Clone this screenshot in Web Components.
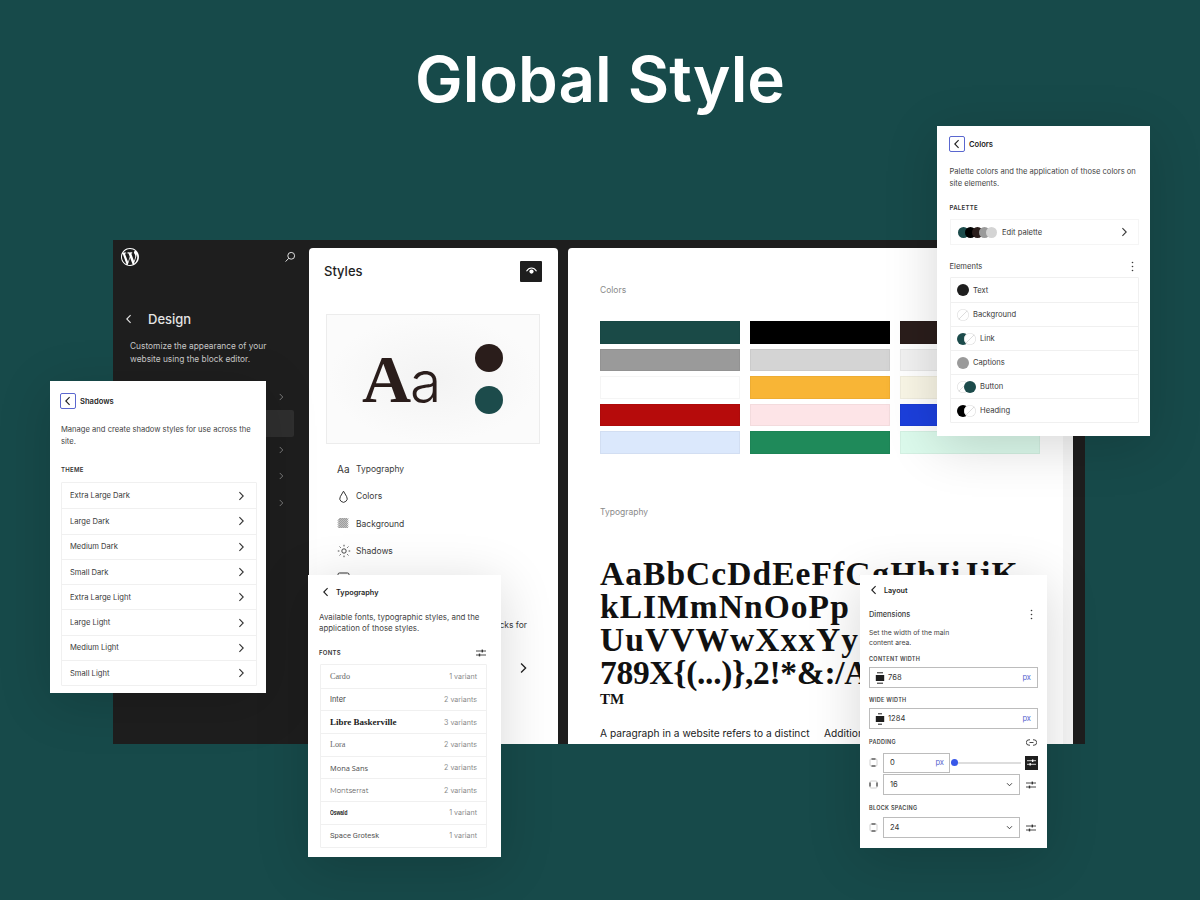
<!DOCTYPE html>
<html lang="en">
<head>
<meta charset="utf-8">
<title>Global Style</title>
<style>
  html, body { margin: 0; padding: 0; background: #174a4a; }
  body { width: 1200px; height: 900px; overflow: hidden; font-family: Inter, "Liberation Sans", sans-serif; }
</style>
</head>
<body>
<global-page></global-page>

<script>
// iconos compartidos, todos en svg inline
const icon = (w, h, box, body) => `<svg width="${w}" height="${h}" viewBox="${box}" fill="none" stroke="currentColor" aria-hidden="true">${body}</svg>`;
const chevronRight = (s = 10) => icon(s, s, "0 0 10 10", `<path d="M3.4 1.2 7.2 5 3.4 8.8" stroke-width="1.1"/>`);
const chevronLeft = (s = 10) => icon(s, s, "0 0 10 10", `<path d="M6.6 1.2 2.8 5 6.6 8.8" stroke-width="1.1"/>`);
const chevronDown = icon(7, 7, "0 0 10 10", `<path d="M1.5 3.2 5 6.8 8.5 3.2" stroke-width="1.3"/>`);
const kebab = icon(3, 11, "0 0 3 11", `<g fill="currentColor" stroke="none"><circle cx="1.5" cy="1.5" r=".8"/><circle cx="1.5" cy="5.5" r=".8"/><circle cx="1.5" cy="9.5" r=".8"/></g>`);
const sliders = icon(10, 10, "0 0 10 10", `<path d="M0 3h10M0 7h10" stroke-width=".9"/><g fill="currentColor" stroke="none"><rect x="5.6" y="1.6" width="1.4" height="2.8"/><rect x="2.8" y="5.6" width="1.4" height="2.8"/></g>`);
const widthIcon = (w) => icon(10, 12, "0 0 10 12", `<path d="M${5 - w} .8h${2 * w}M${5 - w} 11.2h${2 * w}" stroke-width="1"/><rect x=".8" y="3" width="8.4" height="6" fill="currentColor" stroke="none"/>`);
const sideIcon = (d) => icon(9, 9, "0 0 9 9", `<rect x="1" y="1" width="7" height="7" rx="1" stroke="#c4c4c4" stroke-width=".8"/><path d="${d}" stroke="#1e1e1e" stroke-width="1"/>`);

// base: todos los elementos clonan su template al shadow root
class BaseElement extends HTMLElement {
  constructor(){
    super();
    this.attachShadow({mode:"open"});
  }

  getTemplate(){
    const template = document.createElement('template');
    //ojo: sin selector universal, porque pisaria el :host de los hijos
    template.innerHTML = `${this.getMarkup()}<style>
      :host { box-sizing: border-box; }
      h1, h2, h6, p, div, span, strong, nav, header, i, b, em { box-sizing: border-box; margin: 0; padding: 0; }
      svg { display: block; flex: none; }
      ${this.getStyles()}
    </style>`;
    return template;
  }

  connectedCallback(){
    this.shadowRoot.appendChild(this.getTemplate().content.cloneNode(true));
  }
}

class ListRow extends BaseElement {
  getMarkup(){
    return `<slot name="lead"></slot><span class="label"><slot></slot></span><slot name="end">${chevronRight(10)}</slot>`;
  }
  getStyles(){
    return `
      :host { display: flex; align-items: center; height: var(--row-h, 25.3px); padding: 0 var(--row-pad-r, 10px) 0 var(--row-pad-l, 8px);
        font-size: var(--row-fs, 7.6px); color: #3a3a3a; border-top: 1px solid #f0f0f0; }
      :host(:first-child) { border-top: 0; }
      .label { flex: 1; white-space: nowrap; }
      svg { color: #333; }
    `;
  }
}
customElements.define("list-row", ListRow);

class BackHead extends BaseElement {
  getMarkup(){
    return `<span class="back">${chevronLeft(10)}</span><strong><slot></slot></strong>`;
  }
  getStyles(){
    return `
      :host { display: flex; align-items: center; height: 16px; color: #1e1e1e; }
      .back { width: 14px; height: 16px; display: flex; align-items: center; justify-content: center; border-radius: 2px; margin-right: 3px; }
      :host([framed]) .back { width: 16px; border: 1px solid #5a67cf; margin-right: 4px; }
      strong { font-size: var(--head-fs, 7.6px); font-weight: 600; white-space: nowrap; }
    `;
  }
}
customElements.define("back-head", BackHead);

class DarkSidebar extends BaseElement {
  getMarkup(){
    const wp = `<svg class="wp" width="18" height="18" viewBox="0 0 20 20" fill="#fff" aria-hidden="true"><path fill-rule="evenodd" d="M20 10c0-5.51-4.49-10-10-10C4.48 0 0 4.49 0 10c0 5.52 4.48 10 10 10 5.51 0 10-4.48 10-10zM7.78 15.37 4.37 6.22c.55-.02 1.17-.08 1.17-.08.5-.06.44-1.13-.06-1.11 0 0-1.45.11-2.37.11-.18 0-.37 0-.58-.01C4.12 2.69 6.87 1.06 10 1.06c2.33 0 4.45.87 6.05 2.34-.68-.11-1.65.39-1.65 1.58 0 .74.45 1.36.9 2.1.35.61.55 1.36.55 2.46 0 1.49-1.4 5-1.4 5l-3.03-8.37c.54-.02.82-.17.82-.17.5-.05.44-1.25-.06-1.22 0 0-1.44.12-2.37.12-.86 0-2.3-.12-2.3-.12-.5-.03-.56 1.2-.06 1.22 0 0 .45.06.92.08l1.35 3.7-1.9 5.68zm6.52 2.15 2.46-7.12c.46-1.14.61-2.06.61-2.87 0-.29-.02-.56-.06-.81A8.94 8.94 0 0 1 14.3 17.52zM1.06 10c0-1.3.28-2.53.78-3.64l4.26 11.66C3.11 16.56 1.06 13.52 1.06 10zm8.94 8.94c-.88 0-1.73-.13-2.53-.36l2.69-7.8 2.75 7.54c.02.05.04.09.07.13-.93.31-1.93.49-2.98.49z"/></svg>`;
    const search = icon(12, 12, "0 0 12 12", `<circle cx="7.2" cy="4.8" r="3.4" stroke-width="1"/><path d="M4.7 7.3 1.6 10.6" stroke-width="1"/>`);
    return `
      <div class="top">${wp}<span class="search">${search}</span></div>
      <div class="head"><span class="arrow">${chevronLeft(10)}</span><h2>Design</h2></div>
      <p>Customize the appearance of your website using the block editor.</p>
      <div class="rows">
        <div class="row">${chevronRight(8)}</div>
        <div class="row on"></div>
        <div class="row">${chevronRight(8)}</div>
        <div class="row">${chevronRight(8)}</div>
        <div class="row">${chevronRight(8)}</div>
      </div>
    `;
  }
  getStyles(){
    return `
      :host { display: block; background: #1e1e1e; color: #cfcfcf; }
      .top { display: flex; justify-content: space-between; align-items: center; padding: 8px 13px 0 8px; height: 26px; }
      .search { color: #e0e0e0; }
      .head { display: flex; align-items: center; margin-top: 45px; height: 16px; padding-left: 11px; color: #e4e4e4; }
      .arrow { width: 24px; }
      h2 { font-size: 13px; font-weight: 500; }
      p { font-size: 8.35px; line-height: 12.5px; width: 150px; margin: 13px 0 0 17px; color: #c8c8c8; }
      .rows { margin-top: 19px; padding-left: 17px; padding-right: 15px; }
      .row { height: 26.4px; display: flex; align-items: center; justify-content: flex-end; padding-right: 9px; color: #888; border-radius: 2px; }
      .row.on { background: #2f2f2f; }
    `;
  }
}
customElements.define("dark-sidebar", DarkSidebar);

class StylesPanel extends BaseElement {
  getMarkup(){
    const eye = icon(13, 13, "0 0 13 13", `<path d="M1.5 6.2C3 3.8 4.6 3 6.5 3s3.5.8 5 3.2" stroke-width="1.1"/><circle cx="6.5" cy="6.6" r="2.1" fill="currentColor" stroke="none"/>`);
    const drop = icon(13, 13, "0 0 13 13", `<path d="M6.5 1.2 3.3 6.7a3.7 3.7 0 1 0 6.4 0z" stroke-width="1"/>`);
    const hatch = icon(13, 13, "0 0 13 13", `<g stroke-width=".8"><path d="M1 3.6 3.6 1M1 5.6 5.6 1M1 7.6 7.6 1M1 9.6 9.6 1M1.6 11 11 1.6M3.6 11 11 3.6M5.6 11 11 5.6M7.6 11 11 7.6M9.6 11 11 9.6"/></g>`);
    const sun = icon(14, 14, "0 0 14 14", `<circle cx="7" cy="7" r="2.2" stroke-width=".9"/><path d="M7 .8v1.6M7 11.6v1.6M.8 7h1.6M11.6 7h1.6M2.6 2.6l1.1 1.1M10.3 10.3l1.1 1.1M2.6 11.4l1.1-1.1M10.3 3.7l1.1-1.1" stroke-width=".9"/>`);
    const box = icon(13, 13, "0 0 13 13", `<rect x="1" y="1" width="11" height="11" rx="1.5" stroke-width="1"/>`);
    return `
      <header><h2>Styles</h2><span class="eye">${eye}</span></header>
      <div class="preview">
        <span class="aa"><b>A</b><i>a</i></span>
        <span class="dots"><em></em><em class="teal"></em></span>
      </div>
      <nav>
        <div class="item"><span class="ic aatxt">Aa</span>Typography</div>
        <div class="item"><span class="ic">${drop}</span>Colors</div>
        <div class="item"><span class="ic">${hatch}</span>Background</div>
        <div class="item"><span class="ic">${sun}</span>Shadows</div>
        <div class="item"><span class="ic">${box}</span></div>
      </nav>
      <p>blocks for</p>
      <div class="more">${chevronRight(12)}</div>
    `;
  }
  getStyles(){
    return `
      :host { display: block; background: #fff; border-radius: 4px 4px 0 0; overflow: hidden; margin-top: 8px; color: #2a2a2a; }
      header { display: flex; justify-content: space-between; align-items: center; padding: 12px 16px 0 15px; height: 34px; }
      h2 { font-size: 13px; font-weight: 500; color: #1e1e1e; }
      .eye { width: 22px; height: 21px; background: #1e1e1e; color: #fff; display: flex; align-items: center; justify-content: center; border-radius: 1px; }
      .preview { margin: 32px 18px 0 17px; height: 130px; border: 1px solid #ececec; display: flex; align-items: center; padding-left: 35px;
        background: radial-gradient(ellipse at center, #f3f3f3 0%, #fbfbfb 70%); }
      .aa { display: flex; align-items: baseline; font-size: 68px; line-height: 1; color: #2a1d1b; font-family: "Liberation Serif", serif; white-space: nowrap; }
      .aa b { font-weight: 700; letter-spacing: -1px; }
      .aa i { font-style: normal; font-family: Inter, sans-serif; font-weight: 300; font-size: 57px; letter-spacing: -1px; }
      .dots { margin-left: auto; margin-right: 36px; display: flex; flex-direction: column; gap: 14px; }
      .dots em { width: 28px; height: 28px; border-radius: 50%; background: #2a1d1b; display: block; }
      .dots em.teal { background: #1c4b4b; }
      nav { margin-top: 11px; padding-left: 28px; }
      .item { display: flex; align-items: center; height: 27.5px; font-size: 8.5px; color: #3a3a3a; }
      .ic { width: 19px; display: flex; justify-content: flex-start; color: #333; }
      .aatxt { font-size: 10px; }
      p { font-size: 8.5px; white-space: nowrap; margin: 27px 31px 0 0; text-align: right; color: #3a3a3a; }
      .more { display: flex; justify-content: flex-end; padding-right: 29px; margin-top: 32px; color: #222; }
    `;
  }
}
customElements.define("styles-panel", StylesPanel);

class StyleCanvas extends BaseElement {
  getMarkup(){
    const colors = ["#1a4a47","#000000","#2a1d1b","#9a9a9a","#d4d4d4","#f1f1f1","#ffffff","#f8b536","#f9f6e6","#b60b0b","#fde4e7","#1c3fdc","#dbe8fc","#1f8a5a","#dcfaec"];
    return `
      <div class="page">
        <span class="cap">Colors</span>
        <div class="swatches">${colors.map(c => `<i style="background:${c}"></i>`).join("")}</div>
        <span class="cap typo">Typography</span>
        <div class="big">AaBbCcDdEeFfGgHhIiJjK<br>kLIMmNnOoPp<br>UuVVWwXxxYy<br><span>789X{(...)},2!*&amp;:/A</span></div>
        <div class="tm">TM</div>
        <div class="para"><span>A paragraph in a website refers to a distinct</span><span>Additional</span></div>
      </div>
      <div class="track"></div>
    `;
  }
  getStyles(){
    return `
      :host { display: flex; background: #fff; margin-top: 8px; border-radius: 4px 0 0 0; overflow: hidden; }
      .page { flex: 1; min-width: 0; padding: 37px 0 0 32px; overflow: hidden; }
      .track { width: 10px; background: #f6f6f6; }
      .cap { display: block; font-size: 8.5px; line-height: 10px; color: #8a8a8a; }
      .swatches { display: grid; grid-template-columns: repeat(3, 140px); grid-auto-rows: 22.5px; column-gap: 10px; row-gap: 5px; margin-top: 26px; }
      .swatches i { display: block; box-shadow: inset 0 0 0 1px rgba(0,0,0,.04); }
      .typo { margin-top: 53px; }
      .big { font-family: "Liberation Serif", serif; font-weight: 700; font-size: 33.5px; line-height: 33px; color: #111; margin-top: 40px; white-space: nowrap; letter-spacing: 1.05px; }
      .big span { letter-spacing: -.3px; }
      .tm { font-family: "Liberation Serif", serif; font-weight: 700; font-size: 15px; line-height: 16px; color: #111; margin-top: 2px; }
      .para { display: flex; font-size: 10.2px; line-height: 14px; color: #222; margin-top: 19px; white-space: nowrap; }
      .para span:first-child { width: 224px; }
    `;
  }
}
customElements.define("style-canvas", StyleCanvas);

class SiteEditor extends BaseElement {
  getMarkup(){
    return `<dark-sidebar></dark-sidebar><styles-panel></styles-panel><style-canvas></style-canvas>`;
  }
  getStyles(){
    return `
      :host { display: grid; grid-template-columns: 196px 249px 527px; width: 972px; height: 504px; background: #1e1e1e; margin: 0 0 0 113px; overflow: hidden; }
      style-canvas { margin-left: 10px; width: 505px; }
    `;
  }
}
customElements.define("site-editor", SiteEditor);

// paneles flotantes: son ventanas sobre el editor, por eso van en absolute
class FloatPanel extends BaseElement {
  panelBox(){ return ""; }
  baseStyles(){
    return `
      :host { display: block; position: absolute; ${this.panelBox()} background: #fff; box-shadow: 0 10px 50px rgba(0,0,0,.16); color: #3a3a3a; }
      p { font-size: 7.6px; line-height: 11.5px; color: #444; }
      h6 { font-size: 6px; line-height: 8px; font-weight: 600; color: #333; letter-spacing: .3px; }
      .list { border: 1px solid #f0f0f0; border-radius: 1px; }
    `;
  }
}

class ShadowsPanel extends FloatPanel {
  panelBox(){ return "left:50px;top:381px;width:216px;height:312px;padding:12px 9px 0 10px;"; }
  getMarkup(){
    const names = ["Extra Large Dark","Large Dark","Medium Dark","Small Dark","Extra Large Light","Large Light","Medium Light","Small Light"];
    return `
      <back-head framed>Shadows</back-head>
      <p>Manage and create shadow styles for use across the site.</p>
      <h6>THEME</h6>
      <div class="list">${names.map(n => `<list-row>${n}</list-row>`).join("")}</div>
    `;
  }
  getStyles(){
    return `${this.baseStyles()}
      p { margin: 15px 0 0 1px; line-height: 12px; }
      h6 { margin: 18px 0 0 1px; }
      .list { margin: 8px 0 0 1px; }
    `;
  }
}
customElements.define("shadows-panel", ShadowsPanel);

class ColorsPanel extends FloatPanel {
  panelBox(){ return "left:937px;top:126px;width:213px;height:310px;padding:10px 11px 0 12px;"; }
  getMarkup(){
    const white = "#fff";
    const dots = ["#1c4b4b","#000","#2a1d1b","#9a9a9a","#d4d4d4"];
    const el = [["Text",["#1e1e1e"]],["Background",[white]],["Link",["#1c4b4b",white]],["Captions",["#9a9a9a"]],["Button",[white,"#1c4b4b"]],["Heading",["#000",white]]];
    const swatch = (c) => c === white ? `<i class="none"></i>` : `<i style="background:${c}"></i>`;
    return `
      <back-head framed>Colors</back-head>
      <p>Palette colors and the application of those colors on site elements.</p>
      <h6>PALETTE</h6>
      <div class="palette"><span class="stack">${dots.map(c => `<i style="background:${c}"></i>`).join("")}</span><span class="lbl">Edit palette</span>${chevronRight(10)}</div>
      <div class="subhead"><span>Elements</span>${kebab}</div>
      <div class="list">${el.map(([n, cs]) => `<list-row><span slot="lead" class="stack el">${cs.map(swatch).join("")}</span>${n}<span slot="end"></span></list-row>`).join("")}</div>
    `;
  }
  getStyles(){
    return `${this.baseStyles()}
      :host { --row-h: 24px; --row-pad-l: 6px; }
      p { margin: 14px 0 0 .5px; }
      h6 { margin: 15px 0 0 .5px; }
      .palette { display: flex; align-items: center; height: 26px; margin: 7px 0 0 1px; padding: 0 9px 0 7px; border: 1px solid #f5f5f5; font-size: 7.6px; }
      .palette .lbl { flex: 1; margin-left: 5px; }
      .stack { display: flex; }
      .stack i { width: 11px; height: 11px; border-radius: 50%; margin-right: -4px; display: block; }
      .palette .stack { padding-right: 4px; }
      .el { margin-right: 4px; }
      .el i { width: 12px; height: 12px; margin-right: -5px; }
      .el i.none { background: linear-gradient(135deg, #fff 47%, #ddd 47%, #ddd 53%, #fff 53%); box-shadow: inset 0 0 0 .6px #ddd; }
      .el i:last-child { margin-right: 0; }
      .subhead { display: flex; justify-content: space-between; align-items: center; height: 12px; margin: 15px 5px 0 .5px; font-size: 7.6px; }
      .list { margin: 5px 0 0 1px; }
    `;
  }
}
customElements.define("colors-panel", ColorsPanel);

class TypoPanel extends FloatPanel {
  panelBox(){ return "left:308px;top:575px;width:193px;height:282px;padding:9px 14px 0 11px;"; }
  getMarkup(){
    const fonts = [
      ["Cardo","1 variant","'Liberation Serif',serif",400,"#666",8.2],
      ["Inter","2 variants","Inter,sans-serif",400,"#444",7.4],
      ["Libre Baskerville","3 variants","'Liberation Serif',serif",700,"#222",9],
      ["Lora","2 variants","'Liberation Serif',serif",400,"#666",8.2],
      ["Mona Sans","2 variants","'Noto Sans',sans-serif",400,"#555",7.4],
      ["Montserrat","2 variants","Montserrat,sans-serif",400,"#666",7],
      ["Oswald","1 variant","'Liberation Sans',sans-serif",700,"#222",7],
      ["Space Grotesk","1 variant","Roboto,sans-serif",400,"#555",7.6]
    ];
    return `
      <div class="head"><back-head>Typography</back-head></div>
      <p>Available fonts, typographic styles, and the application of those styles.</p>
      <div class="fonts"><h6>FONTS</h6>${sliders}</div>
      <div class="list">${fonts.map(([n, v, ff, w, c, fs]) => `<list-row><span class="${n === "Oswald" ? "narrow" : ""}" style="font-family:${ff};font-weight:${w};color:${c};font-size:${fs}px">${n}</span><span slot="end" class="var">${v}</span></list-row>`).join("")}</div>
    `;
  }
  getStyles(){
    return `${this.baseStyles()}
      :host { --row-h: 22.7px; --row-pad-l: 9px; --row-pad-r: 9px; --head-fs: 7.3px; }
      p { margin: 12px 0 0 0; line-height: 11px; width: 178px; font-size: 7.9px; }
      .fonts { display: flex; justify-content: space-between; align-items: center; margin: 14px 1px 0 0; height: 10px; color: #333; }
      .list { margin: 6px 0 0 1px; }
      .var { font-size: 7.1px; color: #8a8a8a; }
      .narrow { display: inline-block; transform: scaleX(.7); transform-origin: left center; }
    `;
  }
}
customElements.define("typo-panel", TypoPanel);

class LayoutPanel extends FloatPanel {
  panelBox(){ return "left:860px;top:575px;width:187px;height:273px;padding:7px 9px 0 9px;"; }
  getMarkup(){
    const link = icon(11, 7, "0 0 11 7", `<path d="M4 .8H3a2.7 2.7 0 0 0 0 5.4h1M7 .8h1a2.7 2.7 0 0 1 0 5.4H7M3.5 3.5h4" stroke-width=".9"/>`);
    const sideA = sideIcon("M2.5 8h4M2.5 1h4");
    const sideB = sideIcon("M1 2.5v4M8 2.5v4");
    return `
      <div class="head"><back-head>Layout</back-head></div>
      <div class="sub"><span>Dimensions</span>${kebab}</div>
      <p>Set the width of the main<br>content area.</p>
      <h6>CONTENT WIDTH</h6>
      <div class="field wide"><span class="i">${widthIcon(3)}</span><span class="v">768</span><span class="px">px</span></div>
      <h6 class="gap">WIDE WIDTH</h6>
      <div class="field wide"><span class="i">${widthIcon(2)}</span><span class="v">1284</span><span class="px">px</span></div>
      <div class="pad"><h6>PADDING</h6>${link}</div>
      <div class="line one"><span class="s">${sideA}</span>
        <div class="field num"><span class="v">0</span><span class="px">px</span></div>
        <div class="slider"><i></i></div>
        <span class="btn">${sliders}</span>
      </div>
      <div class="line"><span class="s">${sideB}</span>
        <div class="field sel"><span class="v">16</span>${chevronDown}</div>
        <span class="tune">${sliders}</span>
      </div>
      <h6 class="gap2">BLOCK SPACING</h6>
      <div class="line"><span class="s">${sideIcon("M2.5 1h4M2.5 8h4")}</span>
        <div class="field sel"><span class="v">24</span>${chevronDown}</div>
        <span class="tune">${sliders}</span>
      </div>
    `;
  }
  getStyles(){
    return `${this.baseStyles()}
      :host { --head-fs: 7.2px; }
      .head { margin-left: -2px; }
      .sub { display: flex; justify-content: space-between; align-items: center; height: 12px; margin: 10px 5px 0 0; font-size: 7.4px; font-weight: 500; }
      p { margin: 8px 0 0 0; line-height: 10px; font-size: 6.8px; }
      h6 { margin-top: 7px; font-size: 5.5px; color: #444; }
      .field { display: flex; align-items: center; height: 21px; border: 1px solid #bcbcbc; font-size: 7.6px; color: #333; background: #fff; }
      h6 + .field { margin-top: 4px; }
      .wide { padding: 0 6px 0 5px; }
      .wide .i { margin-right: 3px; color: #1e1e1e; }
      .v { flex: 1; }
      .px { color: #5a67cf; font-size: 7.6px; }
      .gap { margin-top: 8px; }
      .pad { display: flex; justify-content: space-between; align-items: center; margin: 9px 1px 0 0; height: 8px; color: #333; }
      .pad h6 { margin: 0; }
      .line { display: flex; align-items: center; height: 21px; margin-top: 1px; }
      .line.one { margin-top: 6px; }
      .s { width: 14px; }
      .num { width: 67px; height: 20px; padding: 0 5px 0 6px; }
      .sel { flex: none; width: 137px; padding: 0 6px 0 6px; }
      .slider { width: 70px; margin-left: 1px; height: 2px; background: #ddd; position: relative; margin-right: 4px; }
      .slider i { position: absolute; left: 0; top: -2.5px; width: 7px; height: 7px; border-radius: 50%; background: #3858e9; }
      .btn { width: 13px; height: 14px; background: #1e1e1e; color: #fff; display: flex; align-items: center; justify-content: center; }
      .btn svg { width: 9px; height: 9px; }
      .tune { margin-left: 6px; color: #333; }
      .gap2 { margin: 9px 0 5px; }
    `;
  }
}
customElements.define("layout-panel", LayoutPanel);

class GlobalPage extends BaseElement {
  getMarkup(){
    return `
      <h1>Global Style</h1>
      <site-editor></site-editor>
      <shadows-panel></shadows-panel>
      <colors-panel></colors-panel>
      <typo-panel></typo-panel>
      <layout-panel></layout-panel>
    `;
  }
  getStyles(){
    return `
      :host { display: block; position: relative; width: 1200px; height: 900px; background: #174a4a; font-family: Inter, "Liberation Sans", sans-serif; }
      h1 { font-size: 63.7px; line-height: 78px; font-weight: 600; color: #fff; text-align: center; padding-top: 40px; height: 240px; }
    `;
  }
}
customElements.define("global-page", GlobalPage);
</script>
</body>
</html>
